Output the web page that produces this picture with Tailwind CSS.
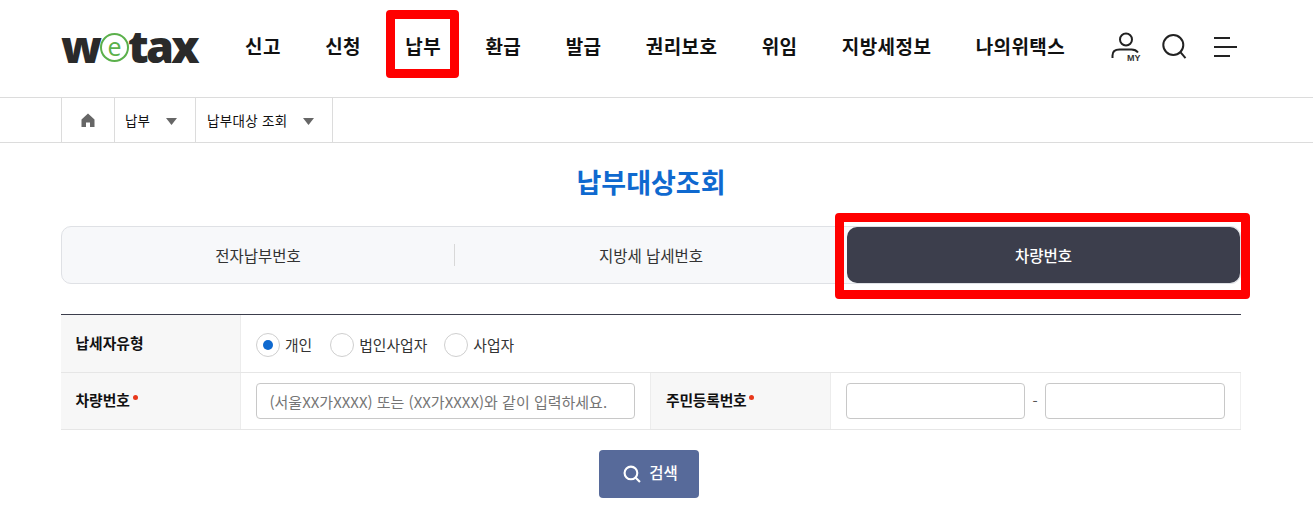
<!DOCTYPE html>
<html lang="ko">
<head>
<meta charset="utf-8">
<script src="https://cdn.jsdelivr.net/npm/@tailwindcss/browser@4"></script>
</head>
<body class="bg-white overflow-hidden font-['Noto_Sans_CJK_KR','Noto_Sans',sans-serif] text-[#111]">
<div class="relative w-[1313px] h-[528px]">
  <header class="h-[98px] border-b border-[#dcdcdc]">
    <div class="w-[1180px] ml-[61px] h-full flex items-center relative">
      <div class="w-[184px] h-[40px] -mt-[7px] flex items-center font-['Open_Sans',sans-serif] font-extrabold text-[#2a2a2a] text-[45px] leading-none">
        <span class="tracking-[-1px]">w</span>
        <span class="w-[29px] h-[29px] rounded-full border-2 border-[#5bb04b] text-[#5bb04b] font-normal text-[25px] leading-none flex items-center justify-center pb-[3px] mx-[-1px] mt-[5px] shrink-0">e</span>
        <span class="tracking-[-2.700px]">tax</span>
      </div>
      <nav class="flex gap-[44.400px] text-[19px] font-bold leading-none -mt-[7px] tracking-[0.4px]">
        <a>신고</a><a>신청</a><a>납부</a><a>환급</a><a>발급</a><a>권리보호</a><a>위임</a><a>지방세정보</a><a>나의위택스</a>
      </nav>
      <div class="absolute left-[1048px] top-[31px]">
        <svg width="132" height="34" viewBox="0 0 132 34" fill="none" stroke="#222" stroke-width="2">
          <circle cx="17" cy="8.500" r="6"/>
          <path d="M3.500 27v-2.500c0-4 3-6 7-6h12c3 0 5 1 6.500 3"/>
          <circle cx="64.300" cy="14" r="10"/>
          <path d="M71 20.700l5.500 6.500"/>
          <path d="M105 7h16M105 16h23M105 25h16"/>
        </svg>
        <span class="absolute left-[18px] top-[23px] text-[9px] font-bold leading-none font-['Liberation_Sans',sans-serif] text-[#333]">MY</span>
      </div>
    </div>
  </header>
  <div class="h-[45px] border-b border-[#dcdcdc]">
    <div class="w-[1180px] ml-[61px] h-full flex border-l border-[#dcdcdc] text-[13.500px] text-[#111]">
      <div class="w-[53px] flex items-center justify-center border-r border-[#dcdcdc]">
        <svg width="14" height="14" viewBox="0 0 14 14" fill="#666"><path d="M7 .5L.500 6.500V14h4.500V9.500h4V14H13.500V6.500z"/></svg>
      </div>
      <div class="w-[81px] flex items-center pl-[10px] border-r border-[#dcdcdc]">
        <span class="w-[41px]">납부</span>
        <svg class="mt-[2px]" width="11" height="7" viewBox="0 0 11 7" fill="#666"><path d="M0 0h11L5.500 7z"/></svg>
      </div>
      <div class="w-[137px] flex items-center pl-[11px] border-r border-[#dcdcdc]">
        <span class="w-[96px] tracking-[0.3px]">납부대상 조회</span>
        <svg class="mt-[2px]" width="11" height="7" viewBox="0 0 11 7" fill="#666"><path d="M0 0h11L5.500 7z"/></svg>
      </div>
    </div>
  </div>
  <main class="w-[1180px] ml-[61px]">
    <h1 class="h-[83px] pt-[20px] text-center text-[27px] leading-[38px] font-bold text-[#0f69cf]">납부대상조회</h1>
    <div class="h-[58px] rounded-[10px] border border-[#dfe1e5] bg-[#f7f8fa] flex items-center text-[15.500px] text-[#333] relative">
      <div class="w-[392px] text-center pt-[1px]">전자납부번호</div>
      <div class="w-px h-[22px] bg-[#d8d8d8]"></div>
      <div class="w-[392px] text-center pt-[1px]">지방세 납세번호</div>
      <div class="absolute left-[785px] top-0 w-[393px] h-[56px] rounded-[10px] bg-[#3c3e4c] text-white flex items-center justify-center font-medium pt-[1px]">차량번호</div>
    </div>
    <div class="mt-[30px] border-t border-[#3c3e4c] text-[14.800px]">
      <div class="flex h-[58px] border-b border-[#e6e6e6]">
        <div class="w-[180px] bg-[#f7f7f7] border-r border-[#ececec] pl-[14.500px] flex items-center font-bold">납세자유형</div>
        <div class="flex-1 flex items-center pl-[15px] text-[#333] pt-[3px]">
          <span class="w-[24px] h-[24px] rounded-full border border-[#cfcfcf] flex items-center justify-center mr-[5px]"><span class="w-[10px] h-[10px] rounded-full bg-[#0f69cf]"></span></span>
          <span class="mr-[18px]">개인</span>
          <span class="w-[24px] h-[24px] rounded-full border border-[#cfcfcf] mr-[5px]"></span>
          <span class="mr-[17px]">법인사업자</span>
          <span class="w-[24px] h-[24px] rounded-full border border-[#cfcfcf] mr-[5px]"></span>
          <span>사업자</span>
        </div>
      </div>
      <div class="flex h-[57px] border-b border-[#e6e6e6]">
        <div class="w-[180px] bg-[#f7f7f7] border-r border-[#ececec] pl-[14.500px] flex items-center font-bold pb-[2px]">차량번호<span class="w-[5px] h-[5px] rounded-full bg-[#e8381b] ml-[3px] mb-[5px]"></span></div>
        <div class="w-[409px] flex items-center pl-[15px]">
          <input placeholder="(서울XX가XXXX) 또는 (XX가XXXX)와 같이 입력하세요." class="w-[379px] h-[36px] pl-[12.500px] pr-[8px] border border-[#c8c8c8] rounded-[4px] text-[15px] placeholder:text-[#757575] outline-none">
        </div>
        <div class="w-[181px] bg-[#f7f7f7] border-x border-[#ececec] pl-[15px] flex items-center font-bold pb-[2px] tracking-[-0.2px]">주민등록번호<span class="w-[5px] h-[5px] rounded-full bg-[#e8381b] ml-[3px] mb-[5px]"></span></div>
        <div class="flex-1 flex items-center pl-[15px] border-r border-[#f0f0f0]">
          <input class="w-[179px] h-[36px] border border-[#c8c8c8] rounded-[4px] outline-none">
          <span class="w-[20px] text-center text-[#555]">-</span>
          <input class="w-[180px] h-[36px] border border-[#c8c8c8] rounded-[4px] outline-none">
        </div>
      </div>
    </div>
    <div class="flex justify-center mt-[20px]">
      <button class="w-[100px] h-[48px] pl-[3px] rounded-[4px] bg-[#576a9a] text-white text-[15.500px] font-medium flex items-center justify-center gap-[8px] -ml-[4px]">
        <svg width="18" height="18" viewBox="0 0 17 17" fill="none" stroke="#fff" stroke-width="2"><circle cx="7.500" cy="7.500" r="6"/><path d="M12 12l4 4"/></svg>
        <span class="-mt-[3px]">검색</span>
      </button>
    </div>
  </main>
  <div class="absolute left-[386px] top-[10px] w-[73px] h-[68px] border-[9px] border-[#ff0000] rounded-[4px]"></div>
  <div class="absolute left-[835px] top-[213px] w-[415px] h-[86px] border-[9px] border-[#ff0000] rounded-[4px]"></div>
</div>
</body>
</html>
